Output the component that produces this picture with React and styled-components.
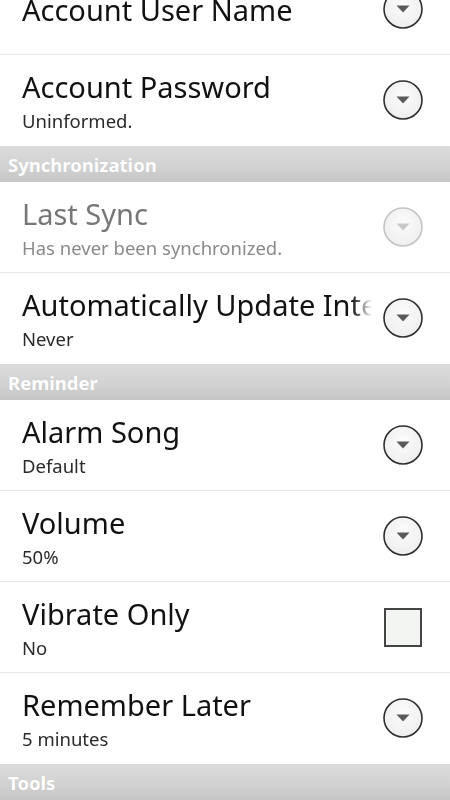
import React from "react";
import styled, { createGlobalStyle } from "styled-components";

const GlobalStyle = createGlobalStyle`
    html, body {
        margin: 0;
        padding: 0;
        background: #ffffff;
    }
    body {
        font-family: "Noto Sans", "Open Sans", sans-serif;
    }
`;

const items = [
    { type: "pref", title: "Account User Name", control: "arrow" },
    { type: "pref", title: "Account Password", summary: "Uninformed.", control: "arrow" },
    { type: "header", title: "Synchronization" },
    { type: "pref", title: "Last Sync", summary: "Has never been synchronized.", control: "arrow", disabled: true },
    { type: "pref", title: "Automatically Update Interval", summary: "Never", control: "arrow" },
    { type: "header", title: "Reminder" },
    { type: "pref", title: "Alarm Song", summary: "Default", control: "arrow" },
    { type: "pref", title: "Volume", summary: "50%", control: "arrow" },
    { type: "pref", title: "Vibrate Only", summary: "No", control: "check" },
    { type: "pref", title: "Remember Later", summary: "5 minutes", control: "arrow" },
    { type: "header", title: "Tools" },
];

function ArrowIcon({ disabled }) {
    const stroke = disabled ? "#c4c4c4" : "#2e2e2e";
    const arrow = disabled ? "#c8c8c8" : "#5a5a5a";
    const id = disabled ? "fillOff" : "fillOn";
    return (
        <svg width="42" height="42" viewBox="0 0 42 42">
            <defs>
                <radialGradient id={id} cx="50%" cy="40%" r="60%">
                    <stop offset="0%" stopColor="#fcfcfc" />
                    <stop offset="100%" stopColor="#eeeeee" />
                </radialGradient>
            </defs>
            <circle cx="21" cy="21" r="19" fill={`url(#${id})`} stroke={stroke} strokeWidth="1.6" />
            <path d="M14.5 17.5 L27.5 17.5 L21 24.5 Z" fill={arrow} />
        </svg>
    );
}

export default function App() {
    return (
        <Page>
            <GlobalStyle />
            <List>
                {items.map((item, i) =>
                    item.type === "header" ? (
                        <SectionHeader key={i}>{item.title}</SectionHeader>
                    ) : (
                        <Row key={i} $last={items[i + 1] && items[i + 1].type === "header"}>
                            <TextBlock>
                                <Title $disabled={item.disabled}>{item.title}</Title>
                                {item.summary && (
                                    <Summary $disabled={item.disabled}>{item.summary}</Summary>
                                )}
                            </TextBlock>
                            <Control>
                                {item.control === "check" ? (
                                    <CheckBox />
                                ) : (
                                    <ArrowIcon disabled={item.disabled} />
                                )}
                            </Control>
                        </Row>
                    )
                )}
            </List>
        </Page>
    );
}

const Page = styled.div`
    width: 450px;
    height: 800px;
    overflow: hidden;
    background: #fff;
`;

/* the list is scrolled a little, first row is cut at the top */
const List = styled.div`
    display: flex;
    flex-direction: column;
    margin-top: -36px;
`;

const Row = styled.div`
    display: flex;
    align-items: center;
    height: 91px;
    box-sizing: border-box;
    padding: 0 26px 0 22px;
    border-bottom: 1px solid ${(p) => (p.$last ? "transparent" : "#e6e6e6")};
`;

const TextBlock = styled.div`
    flex: 1;
    min-width: 0;
    display: flex;
    flex-direction: column;
    padding-top: 1px;
    overflow: hidden;
    -webkit-mask-image: linear-gradient(to right, #000 0, #000 330px, transparent 350px);
    mask-image: linear-gradient(to right, #000 0, #000 330px, transparent 350px);
`;

const Title = styled.div`
    font-size: 29px;
    line-height: 36px;
    color: ${(p) => (p.$disabled ? "#777" : "#111")};
    white-space: nowrap;
`;

const Summary = styled.div`
    margin-top: 4px;
    font-size: 18.5px;
    line-height: 24px;
    color: ${(p) => (p.$disabled ? "#8a8a8a" : "#2a2a2a")};
    white-space: nowrap;
`;

const Control = styled.div`
    width: 42px;
    height: 42px;
    display: flex;
    align-items: center;
    justify-content: center;
    margin-left: 8px;
`;

const CheckBox = styled.div`
    width: 34px;
    height: 35px;
    border: 2px solid #444;
    background: #f3f5f3;
`;

const SectionHeader = styled.div`
    height: 36px;
    display: flex;
    align-items: center;
    padding-left: 8px;
    font-size: 18.5px;
    font-weight: bold;
    color: #fff;
    background: linear-gradient(#dcdcdc 0%, #d2d2d2 55%, #c6c6c6 100%);
    text-shadow: 0 0 1px rgba(0, 0, 0, 0.08);
`;
